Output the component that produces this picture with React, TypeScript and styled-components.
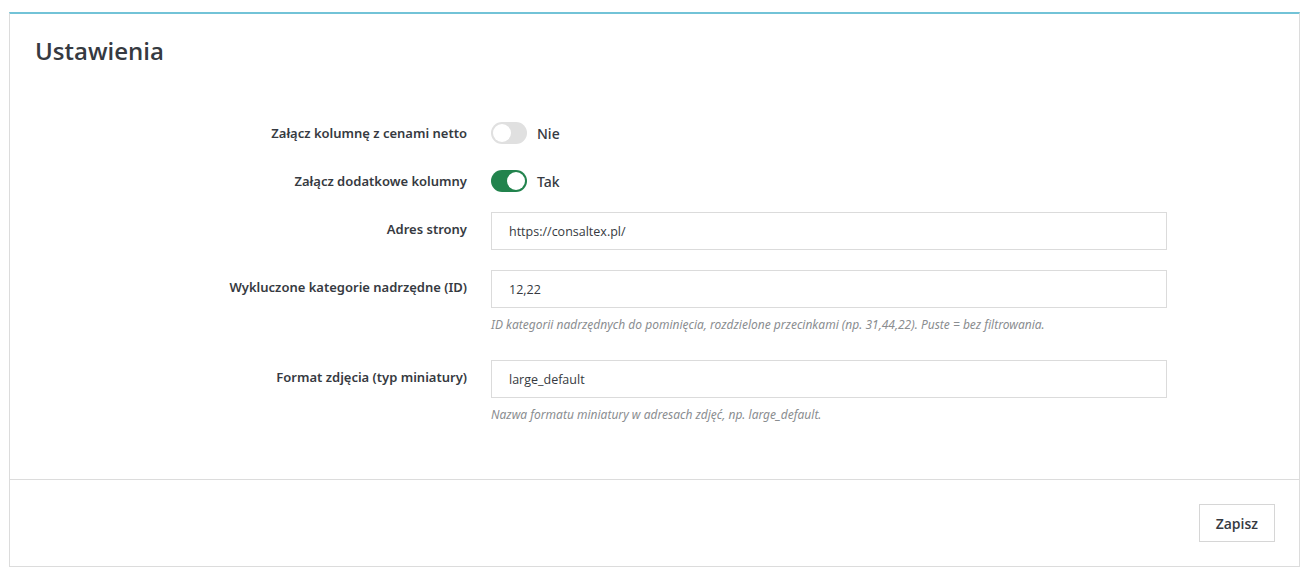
import * as React from 'react'
import styled, { createGlobalStyle } from 'styled-components'

const GlobalStyle = createGlobalStyle`
    body {
        margin: 0;
        background: #fff;
        font-family: "Open Sans", "Noto Sans", sans-serif;
        color: #363a41;
    }
`

const Page = styled.div`
    padding: 12px 6px 6px 9px;
`

const Panel = styled.section`
    border: 1px solid #dcdcdc;
    border-top: 2px solid #72c3d7;
    background: #fff;
`

const PanelHeader = styled.header`
    padding: 21px 25px 0;
`

const Title = styled.h2`
    margin: 0;
    font-size: 24px;
    line-height: 32px;
    font-weight: 600;
    color: #363a41;
`

const Form = styled.div`
    padding: 52px 0 55px;
`

const Row = styled.div<{ $gap: number; $center?: boolean }>`
    display: grid;
    grid-template-columns: 457px 676px;
    column-gap: 24px;
    align-items: ${p => (p.$center ? 'center' : 'start')};
    margin-bottom: ${p => p.$gap}px;
    min-height: ${p => (p.$center ? '28px' : 'auto')};
`

const Label = styled.label<{ $center?: boolean }>`
    text-align: right;
    font-family: "Noto Sans", sans-serif;
    font-size: 13px;
    font-weight: 600;
    line-height: 20px;
    padding-top: ${p => (p.$center ? 0 : 7)}px;
    color: #363a41;
`

const SwitchRow = styled.div`
    display: flex;
    align-items: center;
    gap: 10px;
`

const Track = styled.span<{ $on: boolean }>`
    position: relative;
    width: 36px;
    height: 22px;
    border-radius: 11px;
    background: ${p => (p.$on ? '#22834d' : '#e0e0e0')};

    &::after {
        content: '';
        position: absolute;
        top: 2px;
        left: ${p => (p.$on ? '16px' : '2px')};
        width: 18px;
        height: 18px;
        border-radius: 50%;
        background: #fff;
    }
`

const SwitchText = styled.span`
    font-family: "Noto Sans", sans-serif;
    font-size: 14px;
    font-weight: 500;
    color: #363a41;
`

const Input = styled.input`
    box-sizing: border-box;
    width: 100%;
    height: 38px;
    padding: 0 17px;
    border: 1px solid #dbdbdb;
    border-radius: 0;
    font-family: "Open Sans", sans-serif;
    font-size: 12.5px;
    color: #363a41;
    background: #fff;
    outline: none;
`

const Help = styled.p`
    margin: 8px 0 0;
    font-family: "Noto Sans", sans-serif;
    font-style: italic;
    font-size: 12px;
    line-height: 18px;
    color: #8a8d90;
`

const PanelFooter = styled.footer`
    display: flex;
    justify-content: flex-end;
    padding: 24px;
    border-top: 1px solid #dcdcdc;
`

const Button = styled.button`
    height: 38px;
    padding: 0 16px;
    border: 1px solid #d6d6d6;
    border-radius: 0;
    background: #fff;
    font-family: "Open Sans", sans-serif;
    font-size: 14px;
    font-weight: 600;
    color: #363a41;
`

function Toggle({ on }: { on: boolean }) {
    return (
        <SwitchRow>
            <Track $on={on} />
            <SwitchText>{on ? 'Tak' : 'Nie'}</SwitchText>
        </SwitchRow>
    )
}

export default function App() {
    return (
        <Page>
            <GlobalStyle />
            <Panel>
                <PanelHeader>
                    <Title>Ustawienia</Title>
                </PanelHeader>
                <Form>
                    <Row $gap={20} $center>
                        <Label $center>Załącz kolumnę z cenami netto</Label>
                        <Toggle on={false} />
                    </Row>
                    <Row $gap={17} $center>
                        <Label $center>Załącz dodatkowe kolumny</Label>
                        <Toggle on />
                    </Row>
                    <Row $gap={20}>
                        <Label>Adres strony</Label>
                        <Input defaultValue="https://consaltex.pl/" />
                    </Row>
                    <Row $gap={26}>
                        <Label>Wykluczone kategorie nadrzędne (ID)</Label>
                        <div>
                            <Input defaultValue="12,22" />
                            <Help>ID kategorii nadrzędnych do pominięcia, rozdzielone przecinkami (np. 31,44,22). Puste = bez filtrowania.</Help>
                        </div>
                    </Row>
                    <Row $gap={0}>
                        <Label>Format zdjęcia (typ miniatury)</Label>
                        <div>
                            <Input defaultValue="large_default" />
                            <Help>Nazwa formatu miniatury w adresach zdjęć, np. large_default.</Help>
                        </div>
                    </Row>
                </Form>
                <PanelFooter>
                    <Button>Zapisz</Button>
                </PanelFooter>
            </Panel>
        </Page>
    )
}
